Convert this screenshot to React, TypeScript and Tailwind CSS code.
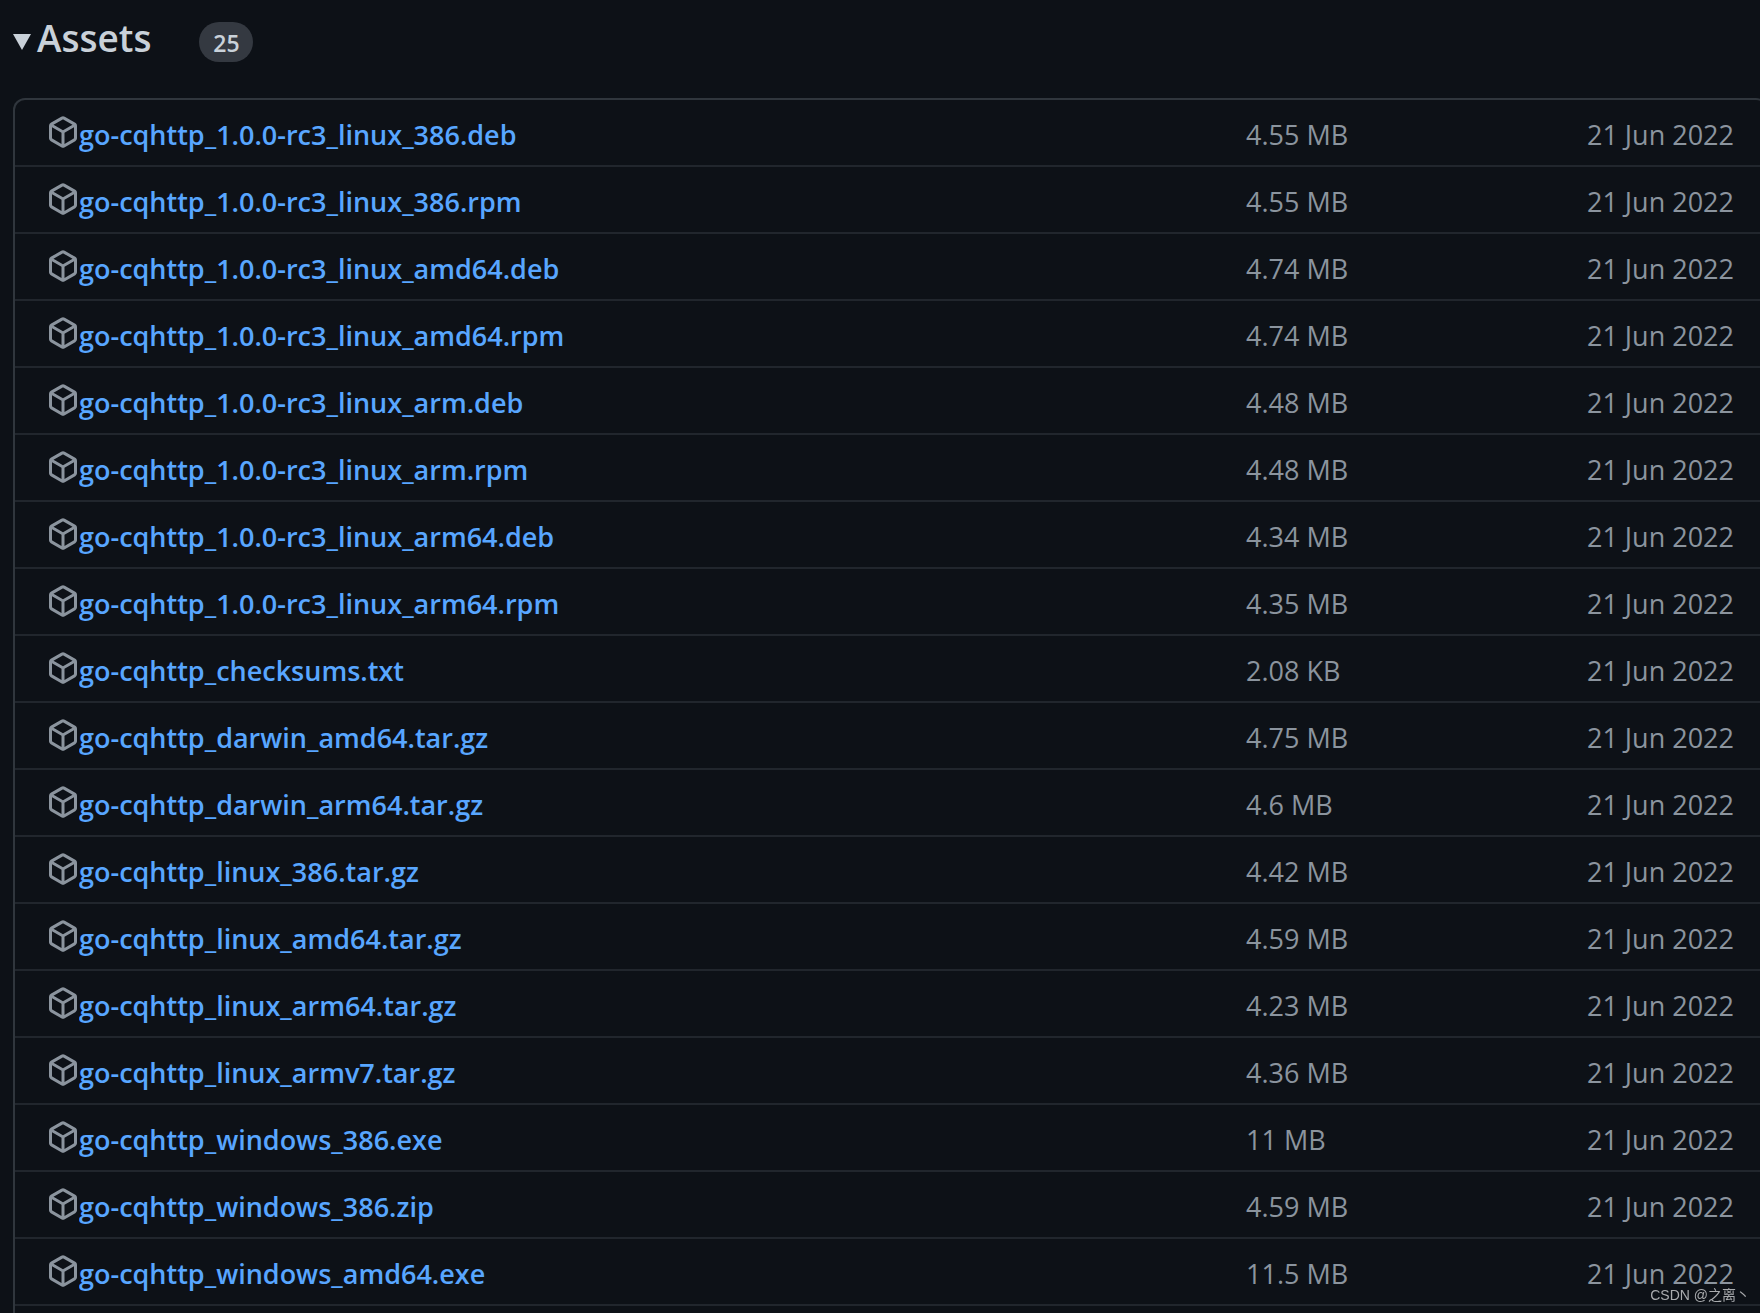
import { useState } from "react";

interface Asset {
  name: string;
  size: string;
}

const RELEASE_DATE = "21 Jun 2022";
const TOTAL_ASSETS = 25;

const assets: Asset[] = [
  { name: "go-cqhttp_1.0.0-rc3_linux_386.deb", size: "4.55 MB" },
  { name: "go-cqhttp_1.0.0-rc3_linux_386.rpm", size: "4.55 MB" },
  { name: "go-cqhttp_1.0.0-rc3_linux_amd64.deb", size: "4.74 MB" },
  { name: "go-cqhttp_1.0.0-rc3_linux_amd64.rpm", size: "4.74 MB" },
  { name: "go-cqhttp_1.0.0-rc3_linux_arm.deb", size: "4.48 MB" },
  { name: "go-cqhttp_1.0.0-rc3_linux_arm.rpm", size: "4.48 MB" },
  { name: "go-cqhttp_1.0.0-rc3_linux_arm64.deb", size: "4.34 MB" },
  { name: "go-cqhttp_1.0.0-rc3_linux_arm64.rpm", size: "4.35 MB" },
  { name: "go-cqhttp_checksums.txt", size: "2.08 KB" },
  { name: "go-cqhttp_darwin_amd64.tar.gz", size: "4.75 MB" },
  { name: "go-cqhttp_darwin_arm64.tar.gz", size: "4.6 MB" },
  { name: "go-cqhttp_linux_386.tar.gz", size: "4.42 MB" },
  { name: "go-cqhttp_linux_amd64.tar.gz", size: "4.59 MB" },
  { name: "go-cqhttp_linux_arm64.tar.gz", size: "4.23 MB" },
  { name: "go-cqhttp_linux_armv7.tar.gz", size: "4.36 MB" },
  { name: "go-cqhttp_windows_386.exe", size: "11 MB" },
  { name: "go-cqhttp_windows_386.zip", size: "4.59 MB" },
  { name: "go-cqhttp_windows_amd64.exe", size: "11.5 MB" },
];

function PackageIcon() {
  return (
    <svg
      viewBox="0 0 16 16"
      className="mb-2 size-8 shrink-0 fill-[#8b949e]"
      aria-hidden="true"
    >
      <path
        fillRule="evenodd"
        d="M8.878.392a1.75 1.75 0 0 0-1.756 0l-5.25 3.045A1.75 1.75 0 0 0 1 4.951v6.098c0 .624.332 1.2.872 1.514l5.25 3.045a1.75 1.75 0 0 0 1.756 0l5.25-3.045c.54-.313.872-.89.872-1.514V4.951c0-.624-.332-1.2-.872-1.514L8.878.392ZM7.875 1.69a.25.25 0 0 1 .25 0l4.63 2.685L8 7.133 3.245 4.375l4.63-2.685ZM2.5 5.677v5.372c0 .09.047.171.125.216l4.625 2.683V8.432L2.5 5.677Zm6.25 8.271 4.625-2.683a.25.25 0 0 0 .125-.216V5.677L8.75 8.432v5.516Z"
      />
    </svg>
  );
}

function AssetRow({ asset }: { asset: Asset }) {
  return (
    <li className="flex h-[67px] items-center border-b-2 border-[#21262d] px-8 pt-1.5 text-[27px] text-[#8b949e]">
      <div className="flex min-w-0 flex-1 items-center">
        <PackageIcon />
        <a
          href={`#${asset.name}`}
          className="truncate font-semibold text-[#58a6ff] hover:underline"
        >
          {asset.name}
        </a>
      </div>
      <span className="w-60 shrink-0 whitespace-nowrap">{asset.size}</span>
      <span className="w-62 shrink-0 text-right whitespace-nowrap">
        {RELEASE_DATE}
      </span>
    </li>
  );
}

export default function App() {
  const [open, setOpen] = useState(true);

  return (
    <main className="flex min-h-screen flex-col overflow-hidden bg-[#0d1117] pl-[13px] font-['Open_Sans','Noto_Sans',sans-serif]">
      <h3 className="flex h-[98px] shrink-0 pt-4">
        <button
          type="button"
          aria-expanded={open}
          onClick={() => setOpen(!open)}
          className="flex items-start text-[#c9d1d9]"
        >
          <svg
            viewBox="0 0 18 16"
            className={open ? "mt-[18px] h-4 w-[18px]" : "mt-[18px] h-4 w-[18px] -rotate-90"}
            aria-hidden="true"
          >
            <path d="M0 0h18L9 16Z" fill="currentColor" />
          </svg>
          <span className="ml-1.5 text-[37px] leading-11 font-semibold">
            Assets
          </span>
          <span className="mt-1.5 ml-12 flex h-10 w-[54px] items-center justify-center rounded-full bg-[#343941] pt-0.5 text-[23px] font-semibold">
            {TOTAL_ASSETS}
          </span>
        </button>
      </h3>
      {open && (
        <ul className="-mr-2 flex-1 rounded-t-xl border-x-2 border-t-2 border-[#30363d]">
          {assets.map((asset) => (
            <AssetRow key={asset.name} asset={asset} />
          ))}
        </ul>
      )}
      <p className="fixed right-2.5 bottom-2 font-['Liberation_Sans','Noto_Sans_CJK_SC',sans-serif] text-[14px] leading-5 text-[#a9abae]">
        CSDN @之离丶
      </p>
    </main>
  );
}
